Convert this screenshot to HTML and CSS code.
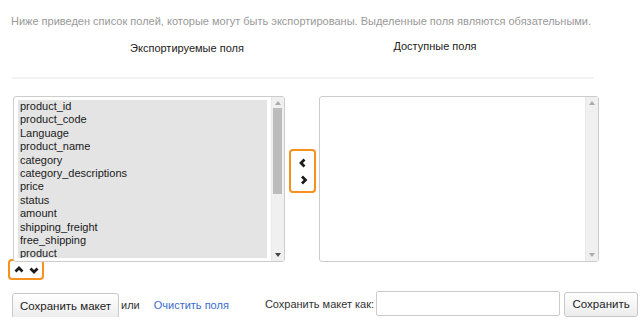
FILE: index.html
```html
<!DOCTYPE html>
<html lang="ru">
<head>
  <meta charset="UTF-8">
  <title>Экспорт полей</title>
  <link rel="stylesheet" href="styles.css">
</head>
<body>
  <div class="page">
    <p class="note">Ниже приведен список полей, которые могут быть экспортированы. Выделенные поля являются обязательными.</p>

    <div class="heads">
      <div class="head head-left">Экспортируемые поля</div>
      <div class="head head-right">Доступные поля</div>
    </div>

    <div class="divider"></div>

    <div class="lists">
      <div class="box box-left">
        <ul class="fields">
          <li>product_id</li>
          <li>product_code</li>
          <li>Language</li>
          <li>product_name</li>
          <li>category</li>
          <li>category_descriptions</li>
          <li>price</li>
          <li>status</li>
          <li>amount</li>
          <li>shipping_freight</li>
          <li>free_shipping</li>
          <li>product</li>
        </ul>
        <div class="scrollbar">
          <span class="arr arr-up off"></span>
          <span class="thumb"></span>
          <span class="arr arr-down"></span>
        </div>
      </div>

      <div class="mover">
        <svg width="10" height="10" viewBox="0 0 10 10"><path d="M6.5 1.5 L3 5 L6.5 8.5" /></svg>
        <svg width="10" height="10" viewBox="0 0 10 10"><path d="M4 1.5 L7.5 5 L4 8.5" /></svg>
      </div>

      <div class="box box-right">
        <ul class="fields empty"></ul>
        <div class="scrollbar">
          <span class="arr arr-up off"></span>
          <span class="arr arr-down off"></span>
        </div>
      </div>
    </div>

    <div class="updown">
      <svg width="10" height="10" viewBox="0 0 10 10"><path d="M1.5 6.5 L5 3 L8.5 6.5" /></svg>
      <svg width="10" height="10" viewBox="0 0 10 10"><path d="M1.5 3.5 L5 7 L8.5 3.5" /></svg>
    </div>

    <div class="actions">
      <button class="btn btn-save-layout">Сохранить макет</button>
      <span class="or">или</span>
      <a href="#" class="clear">Очистить поля</a>
      <label for="layout-name" class="save-as">Сохранить макет как:</label>
      <input type="text" id="layout-name" class="layout-name">
      <button class="btn btn-save">Сохранить</button>
    </div>
  </div>
</body>
</html>
```

FILE: styles.css
```css
body {
  margin: 0;
  font-family: "Liberation Sans", Arial, sans-serif;
  font-size: 11px;
  color: #222;
  background: #fff;
}

.page {
  padding-top: 14px;
}

.note {
  margin: 0 0 0 11px;
  line-height: 14px;
  color: #999;
}

.heads {
  display: flex;
  margin-top: 11px;
  line-height: 14px;
}

.head-left {
  width: 350px;
  margin-left: 12px;
  padding-top: 2px;
  text-align: center;
}

.head-right {
  width: 146px;
  text-align: center;
}

.divider {
  margin: 22px 0 0 12px;
  width: 582px;
  border-top: 2px solid #f2f2f2;
}

.lists {
  display: flex;
  align-items: flex-start;
  margin-top: 17px;
}

.box {
  position: relative;
  box-sizing: border-box;
  height: 166px;
  border: 1px solid #ccc;
  border-radius: 3px;
  background: #fff;
  display: flex;
}

.box-left {
  width: 272px;
  margin-left: 13px;
}

.box-right {
  width: 280px;
  margin-left: 3px;
}

.fields {
  list-style: none;
  margin: 3px 4px;
  padding: 0;
  width: 250px;
  height: 158px;
  background: #e4e4e4;
  overflow: hidden;
}

.fields.empty {
  width: 261px;
  background: #fff;
}

.fields li {
  padding-left: 2px;
  line-height: 13.4px;
  color: #1a1a1a;
}

.scrollbar {
  position: relative;
  margin-left: auto;
  width: 12px;
  height: 164px;
  background: #f0f0f0;
  border-left: 1px solid #e8e8e8;
}

.arr {
  position: absolute;
  left: 3px;
  width: 0;
  height: 0;
  border-left: 3px solid transparent;
  border-right: 3px solid transparent;
}

.arr-up {
  top: 4px;
  border-bottom: 4px solid #444;
}

.arr-down {
  bottom: 4px;
  border-top: 4px solid #444;
}

.arr.off.arr-up {
  border-bottom-color: #aaa;
}

.arr.off.arr-down {
  border-top-color: #aaa;
}

.thumb {
  position: absolute;
  top: 11px;
  left: 1px;
  width: 9px;
  height: 86px;
  background: #bcbcbc;
}

.mover {
  box-sizing: border-box;
  width: 27px;
  height: 44px;
  margin: 53px 0 0 4px;
  border: 2px solid #f7901e;
  border-radius: 4px;
  display: flex;
  flex-direction: column;
  align-items: center;
  justify-content: center;
  gap: 7px;
}

.mover svg,
.updown svg {
  display: block;
  fill: none;
  stroke: #1a1a1a;
  stroke-width: 2.7;
}

.updown {
  box-sizing: border-box;
  width: 36px;
  height: 21px;
  margin: -3px 0 0 8px;
  border: 2px solid #f7901e;
  border-radius: 4px;
  display: flex;
  align-items: center;
  justify-content: center;
  gap: 5px;
}

.actions {
  display: flex;
  align-items: center;
  margin-top: 10px;
  height: 27px;
  white-space: nowrap;
}

.actions > * {
  flex-shrink: 0;
}

.btn {
  box-sizing: border-box;
  height: 25px;
  padding: 0;
  font-family: "Liberation Sans", Arial, sans-serif;
  font-size: 11.5px;
  color: #222;
  background: linear-gradient(#fff, #ececec);
  border: 1px solid #c8c8c8;
  border-radius: 3px;
}

.btn-save-layout {
  width: 107px;
  height: 26px;
  margin: 4px 0 0 12px;
}

.or {
  margin: 2px 0 0 2px;
  color: #333;
}

.clear {
  margin: 2px 0 0 14px;
  color: #3a6bcc;
  text-decoration: none;
}

.save-as {
  margin: 0 0 0 36px;
  color: #333;
}

.layout-name {
  box-sizing: border-box;
  width: 184px;
  height: 25px;
  margin: 0 0 0 2px;
  border: 1px solid #ccc;
  border-radius: 2px;
}

.btn-save {
  width: 74px;
  margin: 1px 0 0 4px;
}
```
